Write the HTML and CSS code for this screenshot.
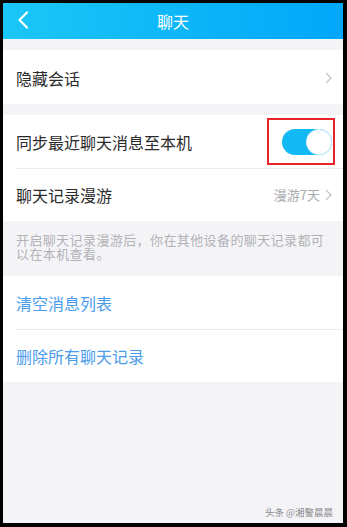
FILE: index.html
```html
<!DOCTYPE html>
<html lang="zh">
<head>
<meta charset="utf-8">
<title>聊天</title>
<link rel="stylesheet" href="styles.css">
</head>
<body>
<div class="frame">
  <div class="screen">
    <header class="topbar">
      <svg class="back" width="12" height="18" viewBox="0 0 12 18"><path d="M10 1.5 L2.5 9 L10 16.5" fill="none" stroke="#fff" stroke-width="2.2" stroke-linecap="round" stroke-linejoin="round"/></svg>
      <div class="title">聊天</div>
    </header>

    <section class="group first">
      <div class="row">
        <span class="label">隐藏会话</span>
        <svg class="chev" width="7" height="12" viewBox="0 0 7 12"><path d="M1 1 L6 6 L1 11" fill="none" stroke="#c4c4c8" stroke-width="1.3"/></svg>
      </div>
    </section>

    <section class="group second">
      <div class="row toggle-row">
        <span class="label">同步最近聊天消息至本机</span>
        <div class="switch"><div class="knob"></div></div>
        <div class="highlight"></div>
      </div>
      <div class="row divided">
        <span class="label">聊天记录漫游</span>
        <span class="value">漫游7天</span>
        <svg class="chev" width="7" height="12" viewBox="0 0 7 12"><path d="M1 1 L6 6 L1 11" fill="none" stroke="#c4c4c8" stroke-width="1.3"/></svg>
      </div>
    </section>

    <p class="note">开启聊天记录漫游后，你在其他设备的聊天记录都可以在本机查看。</p>

    <section class="group">
      <div class="row"><span class="label link">清空消息列表</span></div>
      <div class="row divided"><span class="label link">删除所有聊天记录</span></div>
    </section>

    <div class="watermark">头条 @湘警晨晨</div>
  </div>
</div>
</body>
</html>
```

FILE: styles.css
```css
* { box-sizing: border-box; }
html, body { margin: 0; padding: 0; background: #000; }
body { font-family: "Noto Sans CJK SC", "Noto Sans", sans-serif; }

.frame {
  width: 347px;
  height: 527px;
  padding: 3px 4px 4px 3px;
  background: #000;
}

.screen {
  height: 100%;
  background: #f4f4f7;
  display: flex;
  flex-direction: column;
  overflow: hidden;
}

.topbar {
  height: 36px;
  flex: none;
  background: linear-gradient(to right, #1bc7f6, #00a7fa);
  display: flex;
  align-items: center;
  justify-content: center;
  position: relative;
}
.back { position: absolute; left: 14px; top: 8px; }
.title { color: #fff; font-size: 16px; line-height: 1; }

.group { background: #fff; flex: none; }
.group.first { margin-top: 11px; }
.group.second { margin-top: 11px; }

.row {
  height: 53px;
  display: flex;
  align-items: center;
  padding: 0 11px 0 13px;
  position: relative;
}
.group.first .row { height: 54px; padding-top: 2px; }
.row.divided::before {
  content: "";
  position: absolute;
  left: 13px;
  right: 0;
  top: 0;
  height: 1px;
  background: #ececef;
}

.label { font-size: 16px; color: #2b2b2b; flex: 1; }
.label.link { color: #4a9ceb; }
.value { font-size: 13px; color: #a9a9ae; margin-right: 5px; }
.chev { flex: none; }

.switch {
  width: 50px;
  height: 26px;
  border-radius: 13px;
  background: #12b9f5;
  position: relative;
  flex: none;
}
.knob {
  position: absolute;
  right: 1px;
  top: 1px;
  width: 24px;
  height: 24px;
  border-radius: 50%;
  background: #fff;
  box-shadow: 0 0 0 1px #cfeefb;
}
.highlight {
  position: absolute;
  right: 8px;
  top: 3px;
  width: 68px;
  height: 47px;
  border: 2px solid #e8232a;
}

.note {
  margin: 0;
  height: 55px;
  flex: none;
  padding: 12px 14px 0 13px;
  font-size: 13px;
  line-height: 14px;
  color: #b2b2b7;
  letter-spacing: 0.4px;
}

.watermark {
  margin-top: auto;
  align-self: flex-end;
  font-size: 9.5px;
  color: #8a8a8e;
  padding: 0 10px 4px 0;
}
```
